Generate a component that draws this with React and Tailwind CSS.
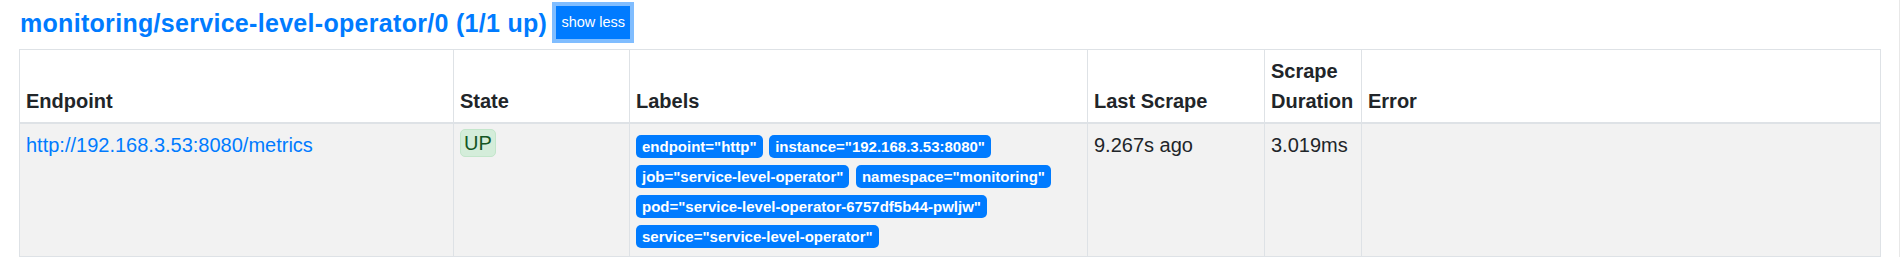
const labels = [
  'endpoint="http"',
  'instance="192.168.3.53:8080"',
  'job="service-level-operator"',
  'namespace="monitoring"',
  'pod="service-level-operator-6757df5b44-pwljw"',
  'service="service-level-operator"',
]

const headers = ['Endpoint', 'State', 'Labels', 'Last Scrape', 'Scrape Duration', 'Error']

const App = () => {
  return (
    <div className="w-[1900px] h-[257px] overflow-hidden bg-white border-r border-[#e8e8e8] pl-[19px] font-['Liberation_Sans',Arial,sans-serif] text-[#212529]">
      {/* Title + toggle */}
      <div className="flex items-center h-[45px] pl-[1px]">
        <h2 className="text-[25px] leading-[30px] font-bold tracking-[0.3px] text-[#007bff]">
          monitoring/service-level-operator/0 (1/1 up)
        </h2>
        <button className="ml-[9px] h-[33px] w-[74px] bg-[#007bff] text-white text-[14.5px] leading-none border border-[#007bff] shadow-[0_0_0_4px_#80bdff]">
          show less
        </button>
      </div>

      <table className="mt-[4px] w-[1861px] table-fixed border-collapse border border-[#dee2e6] text-[20px] leading-[30px]">
        <colgroup>
          <col className="w-[434px]" />
          <col className="w-[176px]" />
          <col className="w-[458px]" />
          <col className="w-[177px]" />
          <col className="w-[97px]" />
          <col className="w-[519px]" />
        </colgroup>
        <thead>
          <tr className="bg-white">
            {headers.map((h) => (
              <th key={h} className="border border-b-2 border-[#dee2e6] p-[6px] text-left align-bottom font-bold">
                {h}
              </th>
            ))}
          </tr>
        </thead>
        <tbody>
          <tr className="bg-[#f2f2f2]">
            <td className="border border-[#dee2e6] p-[6px] align-top">
              <a href="#" className="text-[#007bff]">http://192.168.3.53:8080/metrics</a>
            </td>
            <td className="border border-[#dee2e6] p-[6px] align-top">
              <span className="inline-block h-[28px] px-[3px] leading-[26px] -mt-[1px] align-top border border-[#c3e6cb] bg-[#d4edda] text-[#155724] rounded-[5px]">
                UP
              </span>
            </td>
            <td className="border border-[#dee2e6] p-[6px] align-top">
              {labels.map((l) => (
                <span key={l}>
                  <span className="inline-block mr-[1px] px-[6px] py-[3.75px] rounded-[5px] bg-[#007bff] text-white text-[15px] leading-[15px] font-bold whitespace-nowrap">
                    {l}
                  </span>{' '}
                </span>
              ))}
            </td>
            <td className="border border-[#dee2e6] p-[6px] align-top">9.267s ago</td>
            <td className="border border-[#dee2e6] p-[6px] align-top">3.019ms</td>
            <td className="border border-[#dee2e6] p-[6px] align-top"></td>
          </tr>
        </tbody>
      </table>
    </div>
  )
}

export default App
